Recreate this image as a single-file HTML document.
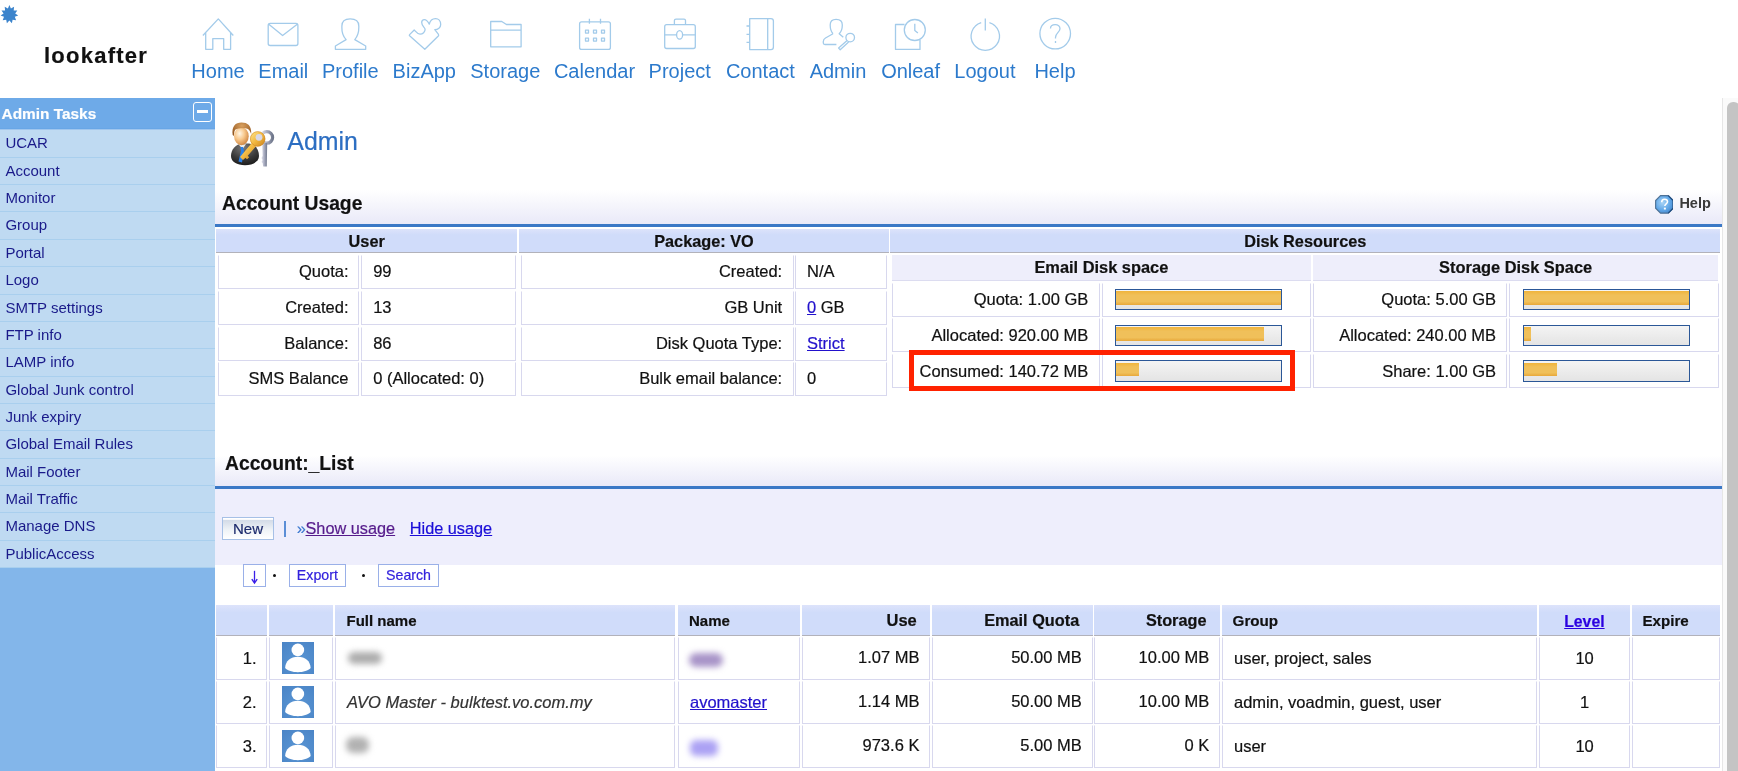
<!DOCTYPE html>
<html><head><meta charset="utf-8">
<style>
*{margin:0;padding:0;box-sizing:border-box}
html,body{width:1738px;height:771px;overflow:hidden;background:#fff;font-family:"Liberation Sans",sans-serif;color:#111}
.a{position:absolute}
.t{position:absolute;white-space:nowrap;line-height:1;-webkit-text-stroke:0.2px currentColor}
/* nav */
.nl{position:absolute;white-space:nowrap;font-size:19px;line-height:19px;color:#2f78c4;top:60px}
svg.ic{position:absolute;overflow:visible}
.ic *{fill:none;stroke:#a3cbea;stroke-width:1.3;stroke-linejoin:round}
/* sidebar */
#sb{position:absolute;left:0;top:98px;width:215px;height:673px;background:#83b6ea}
#sbh{position:absolute;left:0;top:0;width:215px;height:32.3px;background:linear-gradient(#6eaae8 0,#6eaae8 29.5px,#68a6e6 30.5px,#a0c6ee 31.5px,#bfdaf2 32.3px)}
.si{position:absolute;left:0;width:215px;height:27.37px;background:#bfdaf2;border-bottom:1px solid #a9cfee;font-size:15px;color:#1a1a8a;padding-left:5.4px;line-height:26px}
/* cells */
.c{position:absolute;border:1px solid #d8d8ee;border-top-color:#f6f6fb;font-size:16px;line-height:16px;color:#111;white-space:nowrap}
.hd{position:absolute;background:#d0dcfa;border-bottom:1.3px solid #b0b0b8;font-weight:bold;font-size:16px;color:#111;white-space:nowrap}
.bar{position:absolute;width:167px;height:21.4px;border:1.3px solid #2b5797;background:linear-gradient(#f4f4f4,#e4e4e4)}
.bar i{position:absolute;left:0;top:1.6px;height:13.4px;background:linear-gradient(#f0b43c,#f0c05a 30%,#f0c05a 75%,#e8a83a)}
</style></head><body><div id="wrap" style="position:absolute;left:0;top:0;width:1738px;height:771px;overflow:hidden;will-change:transform;background:#fff">

<!-- star -->
<svg class="a" style="left:0;top:4px" width="20" height="20" viewBox="0 0 20 20"><polygon fill="#3c84cc" points="9.4,1 10.9,4.4 14.1,2.8 13.7,6.4 17.3,6.6 15.2,9.6 18.2,11.6 14.8,12.8 16.1,16.2 12.6,15.7 11.9,19.2 9.4,16.6 6.9,19.2 6.2,15.7 2.7,16.2 4,12.8 0.6,11.6 3.6,9.6 1.5,6.6 5.1,6.4 4.7,2.8 7.9,4.4"/></svg>
<div class="t" style="left:44px;top:45.4px;font-size:22px;font-weight:bold;letter-spacing:1.25px;color:#111">lookafter</div>

<!-- nav icons -->
<svg class="ic" style="left:0;top:0" width="1100" height="60">
 <path d="M202.9,35.5 L218.3,18.9 L233.3,35.5 M205.7,32 V49.3 H212.8 V38.6 H223.7 V49.3 H230.6 V32"/>
 <rect x="268.2" y="23.4" width="29.7" height="22.1" rx="2"/><path d="M268.5,24 L282.6,35.5 L297.6,24"/>
 <path d="M346.1,39.6 C341,34 341.9,29 341.9,26 C341.9,21 345,18.9 350.2,18.9 C355.4,18.9 358.8,21 358.8,26 C358.8,29 359.5,34 354.8,39.6 L365.7,46 V49.3 H335.4 V46 Z"/>
 <path d="M409.6,34.6 L414.2,30 C416,31.8 417.5,34.2 420,34.2 C422.8,34.2 425.2,32 425.1,29.3 C425,27.5 421.7,26 421.7,22.5 C421.7,20.5 423,19.6 424.4,19.6 C426,19.6 427.5,20.8 429.3,24.1 C430,21 432.5,18.6 435.5,18.6 C438.5,18.6 440.7,21 440.7,24.5 C440.7,27.5 438,29.6 434.8,29.6 L438.3,34.1 C438.8,34.8 438.8,35.4 438.3,36 L424.8,49.3 L409.6,35.8 C409.2,35.4 409.2,35 409.6,34.6 Z"/>
 <path d="M490.7,46.8 V21.5 H501.8 L506.4,24.5 H521.1 V46.8 Z M490.7,30.1 H521.1"/>
 <rect x="579.6" y="21.8" width="30.8" height="27.6" rx="2"/><path d="M589.4,18.7 V23.8 M600.5,18.7 V23.8"/>
 <rect x="585.5" y="30.1" width="3" height="3"/><rect x="593.5" y="30.1" width="3" height="3"/><rect x="601.5" y="30.1" width="3" height="3"/>
 <rect x="585.5" y="38.1" width="3" height="3"/><rect x="593.5" y="38.1" width="3" height="3"/><rect x="601.5" y="38.1" width="3" height="3"/>
 <rect x="664.7" y="24.7" width="30.6" height="23.8" rx="2"/><path d="M674.4,24.7 V20.5 Q674.4,19.2 676,19.2 H684 Q685.5,19.2 685.5,20.5 V24.7 M664.7,34.9 H676.6 M682.6,34.9 H695.3"/><ellipse cx="679.6" cy="34.9" rx="3" ry="4.2"/>
 <path d="M749.7,18.7 H771 Q773.4,18.7 773.4,21 V47 Q773.4,49.6 771,49.6 H749.7 Z M767.7,18.7 V49.6 M746.5,26 H749.7 M746.5,34.4 H749.7 M746.5,42.4 H749.7"/>
 <path d="M833,33.8 C831,31.5 830.2,28 830.2,25 C830.2,21.2 832.8,19.3 836.1,19.3 C839.5,19.3 842.3,21.2 842.3,25 C842.3,28 841.5,31.5 839.2,33.8 L843.3,37.3 M833,33.8 L825.5,38 C823.8,39 823.3,40 823.3,41.5 V43 C823.3,44 824,44.5 825,44.5 H836.4"/>
 <circle cx="850.2" cy="37.6" r="4.3"/><path d="M847.1,40.5 L838.6,48.1 L840.2,49.7 L848.6,42"/>
 <path d="M904.5,24.5 H895.5 V49.4 H920 V40"/><circle cx="914.8" cy="30" r="10.5"/><path d="M914.8,23.8 V30.5 L917.9,33.1"/>
 <path d="M981.2,22.6 A14.2,14.2 0 1 0 989.4,22.6 M985.3,18.6 V30.6"/>
 <circle cx="1055.2" cy="33.6" r="15.3"/><path d="M1050.5,28.5 C1050.5,25.5 1052.5,24.6 1055.2,24.6 C1058,24.6 1060,26.5 1060,28.8 C1060,32 1055.5,33 1055.5,37.5 V38.5 M1055.5,41 V42.9"/>
</svg>

<!-- sidebar -->
<div id="sb">
 <div id="sbh"><div class="t" style="left:1.6px;top:8px;font-size:15.4px;font-weight:bold;color:#fff">Admin Tasks</div>
  <div class="a" style="left:193px;top:4px;width:19px;height:19.5px;border:1.6px solid #fff;border-radius:3px"></div>
  <div class="a" style="left:197px;top:12.2px;width:11px;height:3px;background:#fff"></div>
 </div>
 <div class="si" style="top:32.3px">UCAR</div>
 <div class="si" style="top:59.67px">Account</div>
 <div class="si" style="top:87.04px">Monitor</div>
 <div class="si" style="top:114.41px">Group</div>
 <div class="si" style="top:141.78px">Portal</div>
 <div class="si" style="top:169.15px">Logo</div>
 <div class="si" style="top:196.52px">SMTP settings</div>
 <div class="si" style="top:223.89px">FTP info</div>
 <div class="si" style="top:251.26px">LAMP info</div>
 <div class="si" style="top:278.63px">Global Junk control</div>
 <div class="si" style="top:306px">Junk expiry</div>
 <div class="si" style="top:333.37px">Global Email Rules</div>
 <div class="si" style="top:360.74px">Mail Footer</div>
 <div class="si" style="top:388.11px">Mail Traffic</div>
 <div class="si" style="top:415.48px">Manage DNS</div>
 <div class="si" style="top:442.85px">PublicAccess</div>
</div>

<!-- scrollbar -->
<div class="a" style="left:1722px;top:98px;width:16px;height:673px;background:#fafafa;border-left:1px solid #e6e6e6"></div>
<div class="a" style="left:1727px;top:102px;width:13px;height:700px;background:#c4c4c4;border-radius:6px"></div>

<div class="t" style="top:60.57px;font-size:20px;color:#2c7acc;left:218.00px;transform:translateX(-50%);-webkit-text-stroke:0;">Home</div>
<div class="t" style="top:60.57px;font-size:20px;color:#2c7acc;left:283.30px;transform:translateX(-50%);-webkit-text-stroke:0;">Email</div>
<div class="t" style="top:60.57px;font-size:20px;color:#2c7acc;left:350.30px;transform:translateX(-50%);-webkit-text-stroke:0;">Profile</div>
<div class="t" style="top:60.57px;font-size:20px;color:#2c7acc;left:424.30px;transform:translateX(-50%);-webkit-text-stroke:0;">BizApp</div>
<div class="t" style="top:60.57px;font-size:20px;color:#2c7acc;left:505.30px;transform:translateX(-50%);-webkit-text-stroke:0;">Storage</div>
<div class="t" style="top:60.57px;font-size:20px;color:#2c7acc;left:594.50px;transform:translateX(-50%);-webkit-text-stroke:0;">Calendar</div>
<div class="t" style="top:60.57px;font-size:20px;color:#2c7acc;left:679.70px;transform:translateX(-50%);-webkit-text-stroke:0;">Project</div>
<div class="t" style="top:60.57px;font-size:20px;color:#2c7acc;left:760.40px;transform:translateX(-50%);-webkit-text-stroke:0;">Contact</div>
<div class="t" style="top:60.57px;font-size:20px;color:#2c7acc;left:838.00px;transform:translateX(-50%);-webkit-text-stroke:0;">Admin</div>
<div class="t" style="top:60.57px;font-size:20px;color:#2c7acc;left:910.60px;transform:translateX(-50%);-webkit-text-stroke:0;">Onleaf</div>
<div class="t" style="top:60.57px;font-size:20px;color:#2c7acc;left:984.90px;transform:translateX(-50%);-webkit-text-stroke:0;">Logout</div>
<div class="t" style="top:60.57px;font-size:20px;color:#2c7acc;left:1055.00px;transform:translateX(-50%);-webkit-text-stroke:0;">Help</div>
<svg class="a" style="left:226px;top:118px" width="52" height="52" viewBox="0 0 52 52">
<defs>
<radialGradient id="sk" cx="0.38" cy="0.35" r="0.75"><stop offset="0" stop-color="#fff6e6"/><stop offset="0.45" stop-color="#f8c88c"/><stop offset="1" stop-color="#c87a34"/></radialGradient>
<radialGradient id="su" cx="0.45" cy="0.2" r="0.9"><stop offset="0" stop-color="#7a7a7a"/><stop offset="0.55" stop-color="#3a3a3a"/><stop offset="1" stop-color="#141414"/></radialGradient>
<radialGradient id="hr" cx="0.5" cy="0.25" r="0.8"><stop offset="0" stop-color="#d8a060"/><stop offset="1" stop-color="#8a4c14"/></radialGradient>
<linearGradient id="ky" x1="0" y1="0" x2="1" y2="1"><stop offset="0" stop-color="#ffe890"/><stop offset="0.5" stop-color="#f2b840"/><stop offset="1" stop-color="#c8801c"/></linearGradient>
<linearGradient id="kg" x1="0" y1="0" x2="1" y2="0"><stop offset="0" stop-color="#e4e4ee"/><stop offset="0.5" stop-color="#a8acc0"/><stop offset="1" stop-color="#70788c"/></linearGradient>
</defs>
<!-- silver key -->
<circle cx="40.8" cy="19.4" r="5.8" fill="none" stroke="url(#kg)" stroke-width="3.2"/>
<path d="M36.2,25 L41.2,25 L40.8,48.5 L37.2,48.5 L36.6,45 L35.4,44 L36.6,42 L35.4,40 L36.6,38 Z" fill="url(#kg)"/>
<!-- body -->
<path d="M5,38 C5,31 10,26.5 16,25.6 L23,25.6 C29,26.5 33,31 33,38 C33,44 26,47.2 19,47.2 C11,47.2 5,44 5,38 Z" fill="url(#su)"/>
<path d="M12.5,26.2 L20,26.2 L16.5,31 Z" fill="#eee"/>
<path d="M14.5,29 L17,29 L18,33 L16,44.5 L12.5,43.5 L15,33 Z" fill="#2a80e8"/>
<!-- face -->
<ellipse cx="15.4" cy="18.2" rx="7.3" ry="9" fill="url(#sk)"/>
<path d="M6.7,17 C5.5,8 9.5,4.4 15.5,4.4 C21.5,4.4 25.8,7.5 25.2,16 C24,12.5 22.5,10.8 20.5,10.5 C17,10 12,10.2 9.5,11.5 C8.5,12.5 8,14.5 7.8,18 Z" fill="url(#hr)"/>
<!-- gold key -->
<path d="M27,23.5 L14,39 L17,42 L19.5,39.8 L21,41.3 L23.2,39.2 L21.7,37.7 L31.5,26.5 Z" fill="url(#ky)"/>
<circle cx="31.7" cy="20.9" r="7.5" fill="url(#ky)"/>
<circle cx="31.7" cy="20.9" r="7.3" fill="none" stroke="#d08a2a" stroke-width="0.6"/>
<circle cx="33" cy="19.3" r="3.4" fill="#d8d8e6"/>
</svg>
<div class="t" style="top:128.92px;font-size:24.9px;color:#2c6ec2;left:287.30px;">Admin</div>
<div class="a" style="left:215.00px;top:190.00px;width:1506.50px;height:34.20px;background:linear-gradient(#fff,#e9e9f8)"></div>
<div class="a" style="left:215.00px;top:224.20px;width:1506.50px;height:2.60px;background:#3a78c6"></div>
<div class="t" style="top:193.76px;font-size:19.3px;font-weight:bold;color:#111;left:222.00px;">Account Usage</div>
<svg class="a" style="left:1654.6px;top:195.4px" width="18.8" height="18.8" viewBox="0 0 18 18">
<defs><radialGradient id="hg" cx="0.4" cy="0.4" r="0.75"><stop offset="0" stop-color="#a8d4f6"/><stop offset="0.55" stop-color="#62a8e8"/><stop offset="1" stop-color="#3a7ec8"/></radialGradient></defs>
<polygon points="5.3,0.6 12.7,0.6 17.4,5.3 17.4,12.7 12.7,17.4 5.3,17.4 0.6,12.7 0.6,5.3" fill="url(#hg)" stroke="#4f7296" stroke-width="1.1"/>
<path d="M12.7,0.6 L17.4,5.3 L17.4,12.7 L12.7,17.4" fill="none" stroke="#1d4c80" stroke-width="1.1"/>
<path d="M6.4,6.9 C6.4,4.9 7.7,4 9.2,4 C10.9,4 12,5 12,6.5 C12,8.4 9.4,8.7 9.4,10.6" fill="none" stroke="#fff" stroke-width="1.5"/>
<rect x="8.5" y="12.1" width="1.9" height="1.8" fill="#fff"/></svg>
<div class="t" style="top:195.52px;font-size:14.5px;font-weight:bold;color:#3a3a3a;left:1679.40px;-webkit-text-stroke:0;">Help</div>
<div class="a" style="left:216.20px;top:229.40px;width:301.00px;height:23.30px;background:linear-gradient(#dde3fb,#d0dcfa 25%);border-bottom:1.5px solid #b2b2ba"></div>
<div class="a" style="left:519.10px;top:229.40px;width:369.70px;height:23.30px;background:linear-gradient(#dde3fb,#d0dcfa 25%);border-bottom:1.5px solid #b2b2ba"></div>
<div class="a" style="left:890.20px;top:229.40px;width:830.10px;height:23.30px;background:linear-gradient(#dde3fb,#d0dcfa 25%);border-bottom:1.5px solid #b2b2ba"></div>
<div class="t" style="top:233.10px;font-size:16.3px;font-weight:bold;left:366.70px;transform:translateX(-50%);">User</div>
<div class="t" style="top:233.10px;font-size:16.3px;font-weight:bold;left:703.95px;transform:translateX(-50%);">Package: VO</div>
<div class="t" style="top:233.10px;font-size:16.3px;font-weight:bold;left:1305.25px;transform:translateX(-50%);">Disk Resources</div>
<div class="a" style="left:218.00px;top:255.00px;width:141.20px;height:34.00px;border:1px solid #d8d8ee;border-top-color:#fff;"></div>
<div class="a" style="left:361.00px;top:255.00px;width:155.00px;height:34.00px;border:1px solid #d8d8ee;border-top-color:#fff;"></div>
<div class="t" style="top:263.13px;font-size:16.5px;right:1389.50px;">Quota:</div>
<div class="t" style="top:263.13px;font-size:16.5px;left:373.20px;">99</div>
<div class="a" style="left:218.00px;top:290.70px;width:141.20px;height:34.00px;border:1px solid #d8d8ee;border-top-color:#fff;"></div>
<div class="a" style="left:361.00px;top:290.70px;width:155.00px;height:34.00px;border:1px solid #d8d8ee;border-top-color:#fff;"></div>
<div class="t" style="top:298.83px;font-size:16.5px;right:1389.50px;">Created:</div>
<div class="t" style="top:298.83px;font-size:16.5px;left:373.20px;">13</div>
<div class="a" style="left:218.00px;top:326.50px;width:141.20px;height:34.00px;border:1px solid #d8d8ee;border-top-color:#fff;"></div>
<div class="a" style="left:361.00px;top:326.50px;width:155.00px;height:34.00px;border:1px solid #d8d8ee;border-top-color:#fff;"></div>
<div class="t" style="top:334.63px;font-size:16.5px;right:1389.50px;">Balance:</div>
<div class="t" style="top:334.63px;font-size:16.5px;left:373.20px;">86</div>
<div class="a" style="left:218.00px;top:362.00px;width:141.20px;height:34.00px;border:1px solid #d8d8ee;border-top-color:#fff;"></div>
<div class="a" style="left:361.00px;top:362.00px;width:155.00px;height:34.00px;border:1px solid #d8d8ee;border-top-color:#fff;"></div>
<div class="t" style="top:370.13px;font-size:16.5px;right:1389.50px;">SMS Balance</div>
<div class="t" style="top:370.13px;font-size:16.5px;left:373.20px;">0 (Allocated: 0)</div>
<div class="a" style="left:521.00px;top:255.00px;width:272.80px;height:34.00px;border:1px solid #d8d8ee;border-top-color:#fff;"></div>
<div class="a" style="left:795.00px;top:255.00px;width:92.30px;height:34.00px;border:1px solid #d8d8ee;border-top-color:#fff;"></div>
<div class="t" style="top:263.13px;font-size:16.5px;right:955.80px;">Created:</div>
<div class="t" style="top:263.13px;font-size:16.5px;left:807.00px;">N/A</div>
<div class="a" style="left:521.00px;top:290.70px;width:272.80px;height:34.00px;border:1px solid #d8d8ee;border-top-color:#fff;"></div>
<div class="a" style="left:795.00px;top:290.70px;width:92.30px;height:34.00px;border:1px solid #d8d8ee;border-top-color:#fff;"></div>
<div class="t" style="top:298.83px;font-size:16.5px;right:955.80px;">GB Unit</div>
<div class="t" style="top:298.83px;font-size:16.5px;left:807.00px;"><u style="color:#2211cc">0</u> GB</div>
<div class="a" style="left:521.00px;top:326.50px;width:272.80px;height:34.00px;border:1px solid #d8d8ee;border-top-color:#fff;"></div>
<div class="a" style="left:795.00px;top:326.50px;width:92.30px;height:34.00px;border:1px solid #d8d8ee;border-top-color:#fff;"></div>
<div class="t" style="top:334.63px;font-size:16.5px;right:955.80px;">Disk Quota Type:</div>
<div class="t" style="top:334.63px;font-size:16.5px;left:807.00px;"><u style="color:#2211cc">Strict</u></div>
<div class="a" style="left:521.00px;top:362.00px;width:272.80px;height:34.00px;border:1px solid #d8d8ee;border-top-color:#fff;"></div>
<div class="a" style="left:795.00px;top:362.00px;width:92.30px;height:34.00px;border:1px solid #d8d8ee;border-top-color:#fff;"></div>
<div class="t" style="top:370.13px;font-size:16.5px;right:955.80px;">Bulk email balance:</div>
<div class="t" style="top:370.13px;font-size:16.5px;left:807.00px;">0</div>
<div class="a" style="left:891.70px;top:255.30px;width:419.30px;height:26.10px;background:#eeeefb;border-bottom:1px solid #dcdcf0"></div>
<div class="a" style="left:1312.80px;top:255.30px;width:405.70px;height:26.10px;background:#eeeefb;border-bottom:1px solid #dcdcf0"></div>
<div class="t" style="top:259.11px;font-size:16.4px;font-weight:bold;left:1101.35px;transform:translateX(-50%);">Email Disk space</div>
<div class="t" style="top:259.11px;font-size:16.4px;font-weight:bold;left:1515.65px;transform:translateX(-50%);">Storage Disk Space</div>
<div class="a" style="left:891.70px;top:282.60px;width:208.30px;height:34.00px;border:1px solid #d8d8ee;border-top-color:#fff;"></div>
<div class="a" style="left:1102.00px;top:282.60px;width:209.40px;height:34.00px;border:1px solid #d8d8ee;border-top-color:#fff;"></div>
<div class="a" style="left:1312.80px;top:282.60px;width:194.20px;height:34.00px;border:1px solid #d8d8ee;border-top-color:#fff;"></div>
<div class="a" style="left:1509.20px;top:282.60px;width:209.40px;height:34.00px;border:1px solid #d8d8ee;border-top-color:#fff;"></div>
<div class="t" style="top:291.03px;font-size:16.5px;right:649.70px;">Quota: 1.00 GB</div>
<div class="t" style="top:291.03px;font-size:16.5px;right:242.00px;">Quota: 5.00 GB</div>
<div class="bar" style="left:1115px;top:288.80px"><i style="width:165px"></i></div>
<div class="bar" style="left:1522.8px;top:288.80px"><i style="width:165px"></i></div>
<div class="a" style="left:891.70px;top:318.40px;width:208.30px;height:34.00px;border:1px solid #d8d8ee;border-top-color:#fff;"></div>
<div class="a" style="left:1102.00px;top:318.40px;width:209.40px;height:34.00px;border:1px solid #d8d8ee;border-top-color:#fff;"></div>
<div class="a" style="left:1312.80px;top:318.40px;width:194.20px;height:34.00px;border:1px solid #d8d8ee;border-top-color:#fff;"></div>
<div class="a" style="left:1509.20px;top:318.40px;width:209.40px;height:34.00px;border:1px solid #d8d8ee;border-top-color:#fff;"></div>
<div class="t" style="top:326.83px;font-size:16.5px;right:649.70px;">Allocated: 920.00 MB</div>
<div class="t" style="top:326.83px;font-size:16.5px;right:242.00px;">Allocated: 240.00 MB</div>
<div class="bar" style="left:1115px;top:324.60px"><i style="width:148px"></i></div>
<div class="bar" style="left:1522.8px;top:324.60px"><i style="width:7px"></i></div>
<div class="a" style="left:891.70px;top:354.20px;width:208.30px;height:34.00px;border:1px solid #d8d8ee;border-top-color:#fff;"></div>
<div class="a" style="left:1102.00px;top:354.20px;width:209.40px;height:34.00px;border:1px solid #d8d8ee;border-top-color:#fff;"></div>
<div class="a" style="left:1312.80px;top:354.20px;width:194.20px;height:34.00px;border:1px solid #d8d8ee;border-top-color:#fff;"></div>
<div class="a" style="left:1509.20px;top:354.20px;width:209.40px;height:34.00px;border:1px solid #d8d8ee;border-top-color:#fff;"></div>
<div class="t" style="top:362.63px;font-size:16.5px;right:649.70px;">Consumed: 140.72 MB</div>
<div class="t" style="top:362.63px;font-size:16.5px;right:242.00px;">Share: 1.00 GB</div>
<div class="bar" style="left:1115px;top:360.40px"><i style="width:23px"></i></div>
<div class="bar" style="left:1522.8px;top:360.40px"><i style="width:33px"></i></div>
<div class="a" style="left:909.20px;top:349.70px;width:386.20px;height:40.90px;border:5.1px solid #ff2200"></div>
<div class="a" style="left:215.00px;top:452.00px;width:1506.50px;height:34.40px;background:linear-gradient(#fff 10%,#e9e9f8)"></div>
<div class="a" style="left:215.00px;top:486.40px;width:1506.50px;height:3.00px;background:#3a78c6"></div>
<div class="t" style="top:454.46px;font-size:19.3px;font-weight:bold;color:#111;left:225.00px;">Account:_List</div>
<div class="a" style="left:215.00px;top:489.40px;width:1506.50px;height:75.40px;background:#eeeefc"></div>
<div class="a" style="left:222.10px;top:517.20px;width:51.90px;height:22.50px;border:1px solid #a6c0e6;background:linear-gradient(#fff 0,#fff 6%,#d4dce8 12%,#eef2f6 55%,#fff)"></div>
<div class="t" style="top:520.60px;font-size:15px;color:#1c2a6c;left:248.00px;transform:translateX(-50%);">New</div>
<div class="a" style="left:284.20px;top:521.20px;width:1.70px;height:15.60px;background:#5b8ed6"></div>
<div class="t" style="top:519.50px;font-size:16.3px;color:#3a78d0;left:296.80px;">&raquo;</div>
<div class="t" style="top:519.50px;font-size:16.3px;color:#551a8b;left:305.50px;"><u>Show usage</u></div>
<div class="t" style="top:519.50px;font-size:16.3px;color:#1a0dd8;left:409.80px;"><u>Hide usage</u></div>
<div class="a" style="left:243.10px;top:564.00px;width:22.60px;height:22.80px;border:1px solid #9ab0e8"></div>
<svg class="a" style="left:248px;top:568px" width="14" height="18" viewBox="0 0 14 18"><path d="M6.5,2.8 V14" stroke="#3a1fe8" stroke-width="1.3"/><path d="M3.8,11.2 L6.5,15 L9.2,11.2" fill="none" stroke="#3a1fe8" stroke-width="1.4"/></svg><div class="a" style="left:272.50px;top:573.50px;width:3.00px;height:3.00px;background:#111;border-radius:50%"></div>
<div class="a" style="left:289.10px;top:563.90px;width:56.50px;height:22.70px;border:1px solid #9ab0e8"></div>
<div class="t" style="top:568.48px;font-size:14.2px;color:#3322dd;left:317.35px;transform:translateX(-50%);">Export</div>
<div class="a" style="left:362.00px;top:573.50px;width:3.00px;height:3.00px;background:#111;border-radius:50%"></div>
<div class="a" style="left:378.10px;top:563.90px;width:60.80px;height:22.70px;border:1px solid #9ab0e8"></div>
<div class="t" style="top:568.48px;font-size:14.2px;color:#3322dd;left:408.50px;transform:translateX(-50%);">Search</div>
<div class="a" style="left:216.20px;top:604.90px;width:51.10px;height:31.10px;background:linear-gradient(#dde3fb,#d0dcfa 25%);border-bottom:1.5px solid #b2b2ba"></div>
<div class="a" style="left:269.20px;top:604.90px;width:63.80px;height:31.10px;background:linear-gradient(#dde3fb,#d0dcfa 25%);border-bottom:1.5px solid #b2b2ba"></div>
<div class="a" style="left:334.90px;top:604.90px;width:340.50px;height:31.10px;background:linear-gradient(#dde3fb,#d0dcfa 25%);border-bottom:1.5px solid #b2b2ba"></div>
<div class="a" style="left:677.70px;top:604.90px;width:122.10px;height:31.10px;background:linear-gradient(#dde3fb,#d0dcfa 25%);border-bottom:1.5px solid #b2b2ba"></div>
<div class="a" style="left:801.60px;top:604.90px;width:128.40px;height:31.10px;background:linear-gradient(#dde3fb,#d0dcfa 25%);border-bottom:1.5px solid #b2b2ba"></div>
<div class="a" style="left:931.80px;top:604.90px;width:161.10px;height:31.10px;background:linear-gradient(#dde3fb,#d0dcfa 25%);border-bottom:1.5px solid #b2b2ba"></div>
<div class="a" style="left:1094.30px;top:604.90px;width:125.70px;height:31.10px;background:linear-gradient(#dde3fb,#d0dcfa 25%);border-bottom:1.5px solid #b2b2ba"></div>
<div class="a" style="left:1221.70px;top:604.90px;width:315.30px;height:31.10px;background:linear-gradient(#dde3fb,#d0dcfa 25%);border-bottom:1.5px solid #b2b2ba"></div>
<div class="a" style="left:1539.00px;top:604.90px;width:90.80px;height:31.10px;background:linear-gradient(#dde3fb,#d0dcfa 25%);border-bottom:1.5px solid #b2b2ba"></div>
<div class="a" style="left:1631.70px;top:604.90px;width:88.60px;height:31.10px;background:linear-gradient(#dde3fb,#d0dcfa 25%);border-bottom:1.5px solid #b2b2ba"></div>
<div class="t" style="top:613.30px;font-size:15px;font-weight:bold;left:346.50px;">Full name</div>
<div class="t" style="top:613.30px;font-size:15px;font-weight:bold;left:689.00px;">Name</div>
<div class="t" style="top:612.03px;font-size:16.5px;font-weight:bold;right:821.20px;">Use</div>
<div class="t" style="top:612.20px;font-size:16.3px;font-weight:bold;right:658.80px;">Email Quota</div>
<div class="t" style="top:612.20px;font-size:16.3px;font-weight:bold;right:531.50px;">Storage</div>
<div class="t" style="top:613.13px;font-size:15.2px;font-weight:bold;left:1232.60px;">Group</div>
<div class="t" style="top:614.12px;font-size:15.8px;font-weight:bold;color:#2a00e0;left:1584.40px;transform:translateX(-50%);"><u>Level</u></div>
<div class="t" style="top:613.21px;font-size:15.1px;font-weight:bold;left:1642.50px;">Expire</div>
<div class="a" style="left:216.20px;top:636.60px;width:51.10px;height:43.20px;border:1px solid #d8d8ee;border-top-color:#fff;"></div>
<div class="a" style="left:269.20px;top:636.60px;width:63.80px;height:43.20px;border:1px solid #d8d8ee;border-top-color:#fff;"></div>
<div class="a" style="left:334.90px;top:636.60px;width:340.50px;height:43.20px;border:1px solid #d8d8ee;border-top-color:#fff;"></div>
<div class="a" style="left:677.70px;top:636.60px;width:122.10px;height:43.20px;border:1px solid #d8d8ee;border-top-color:#fff;"></div>
<div class="a" style="left:801.60px;top:636.60px;width:128.40px;height:43.20px;border:1px solid #d8d8ee;border-top-color:#fff;"></div>
<div class="a" style="left:931.80px;top:636.60px;width:161.10px;height:43.20px;border:1px solid #d8d8ee;border-top-color:#fff;"></div>
<div class="a" style="left:1094.30px;top:636.60px;width:125.70px;height:43.20px;border:1px solid #d8d8ee;border-top-color:#fff;"></div>
<div class="a" style="left:1221.70px;top:636.60px;width:315.30px;height:43.20px;border:1px solid #d8d8ee;border-top-color:#fff;"></div>
<div class="a" style="left:1539.00px;top:636.60px;width:90.80px;height:43.20px;border:1px solid #d8d8ee;border-top-color:#fff;"></div>
<div class="a" style="left:1631.70px;top:636.60px;width:88.60px;height:43.20px;border:1px solid #d8d8ee;border-top-color:#fff;"></div>
<div class="t" style="top:649.63px;font-size:16.5px;right:1481.50px;">1.</div>
<div class="a" style="left:281.50px;top:641.90px;width:32.70px;height:32.60px;background:radial-gradient(circle at 50% 60%,#5a96d4,#4a84c6)"></div>
<svg class="a" style="left:281.5px;top:641.90px" width="32.7" height="32.6" viewBox="0 0 33 33"><circle cx="16" cy="8" r="6.4" fill="#fff"/><path d="M3.1,26.4 C3.5,19 8.5,15 16,15 C23.5,15 28.5,19 29,26.4 C24,32 8,32 3.1,26.4 Z" fill="#fff"/></svg>
<div class="t" style="top:649.63px;font-size:16.5px;left:347.00px;"></div>
<div class="t" style="top:649.63px;font-size:16.5px;left:690.00px;"></div>
<div class="t" style="top:649.23px;font-size:16.5px;right:818.60px;">1.07 MB</div>
<div class="t" style="top:649.23px;font-size:16.5px;right:656.20px;">50.00 MB</div>
<div class="t" style="top:649.23px;font-size:16.5px;right:528.80px;">10.00 MB</div>
<div class="t" style="top:649.63px;font-size:16.5px;left:1234.00px;">user, project, sales</div>
<div class="t" style="top:649.63px;font-size:16.5px;left:1584.60px;transform:translateX(-50%);">10</div>
<div class="a" style="left:216.20px;top:680.60px;width:51.10px;height:43.20px;border:1px solid #d8d8ee;border-top-color:#fff;"></div>
<div class="a" style="left:269.20px;top:680.60px;width:63.80px;height:43.20px;border:1px solid #d8d8ee;border-top-color:#fff;"></div>
<div class="a" style="left:334.90px;top:680.60px;width:340.50px;height:43.20px;border:1px solid #d8d8ee;border-top-color:#fff;"></div>
<div class="a" style="left:677.70px;top:680.60px;width:122.10px;height:43.20px;border:1px solid #d8d8ee;border-top-color:#fff;"></div>
<div class="a" style="left:801.60px;top:680.60px;width:128.40px;height:43.20px;border:1px solid #d8d8ee;border-top-color:#fff;"></div>
<div class="a" style="left:931.80px;top:680.60px;width:161.10px;height:43.20px;border:1px solid #d8d8ee;border-top-color:#fff;"></div>
<div class="a" style="left:1094.30px;top:680.60px;width:125.70px;height:43.20px;border:1px solid #d8d8ee;border-top-color:#fff;"></div>
<div class="a" style="left:1221.70px;top:680.60px;width:315.30px;height:43.20px;border:1px solid #d8d8ee;border-top-color:#fff;"></div>
<div class="a" style="left:1539.00px;top:680.60px;width:90.80px;height:43.20px;border:1px solid #d8d8ee;border-top-color:#fff;"></div>
<div class="a" style="left:1631.70px;top:680.60px;width:88.60px;height:43.20px;border:1px solid #d8d8ee;border-top-color:#fff;"></div>
<div class="t" style="top:693.63px;font-size:16.5px;right:1481.50px;">2.</div>
<div class="a" style="left:281.50px;top:685.90px;width:32.70px;height:32.60px;background:radial-gradient(circle at 50% 60%,#5a96d4,#4a84c6)"></div>
<svg class="a" style="left:281.5px;top:685.90px" width="32.7" height="32.6" viewBox="0 0 33 33"><circle cx="16" cy="8" r="6.4" fill="#fff"/><path d="M3.1,26.4 C3.5,19 8.5,15 16,15 C23.5,15 28.5,19 29,26.4 C24,32 8,32 3.1,26.4 Z" fill="#fff"/></svg>
<div class="t" style="top:693.63px;font-size:16.5px;left:347.00px;"><i style="color:#333">AVO Master - bulktest.vo.com.my</i></div>
<div class="t" style="top:693.63px;font-size:16.5px;left:690.00px;"><u style="color:#2211cc">avomaster</u></div>
<div class="t" style="top:693.23px;font-size:16.5px;right:818.60px;">1.14 MB</div>
<div class="t" style="top:693.23px;font-size:16.5px;right:656.20px;">50.00 MB</div>
<div class="t" style="top:693.23px;font-size:16.5px;right:528.80px;">10.00 MB</div>
<div class="t" style="top:693.63px;font-size:16.5px;left:1234.00px;">admin, voadmin, guest, user</div>
<div class="t" style="top:693.63px;font-size:16.5px;left:1584.60px;transform:translateX(-50%);">1</div>
<div class="a" style="left:216.20px;top:724.60px;width:51.10px;height:43.20px;border:1px solid #d8d8ee;border-top-color:#fff;"></div>
<div class="a" style="left:269.20px;top:724.60px;width:63.80px;height:43.20px;border:1px solid #d8d8ee;border-top-color:#fff;"></div>
<div class="a" style="left:334.90px;top:724.60px;width:340.50px;height:43.20px;border:1px solid #d8d8ee;border-top-color:#fff;"></div>
<div class="a" style="left:677.70px;top:724.60px;width:122.10px;height:43.20px;border:1px solid #d8d8ee;border-top-color:#fff;"></div>
<div class="a" style="left:801.60px;top:724.60px;width:128.40px;height:43.20px;border:1px solid #d8d8ee;border-top-color:#fff;"></div>
<div class="a" style="left:931.80px;top:724.60px;width:161.10px;height:43.20px;border:1px solid #d8d8ee;border-top-color:#fff;"></div>
<div class="a" style="left:1094.30px;top:724.60px;width:125.70px;height:43.20px;border:1px solid #d8d8ee;border-top-color:#fff;"></div>
<div class="a" style="left:1221.70px;top:724.60px;width:315.30px;height:43.20px;border:1px solid #d8d8ee;border-top-color:#fff;"></div>
<div class="a" style="left:1539.00px;top:724.60px;width:90.80px;height:43.20px;border:1px solid #d8d8ee;border-top-color:#fff;"></div>
<div class="a" style="left:1631.70px;top:724.60px;width:88.60px;height:43.20px;border:1px solid #d8d8ee;border-top-color:#fff;"></div>
<div class="t" style="top:737.63px;font-size:16.5px;right:1481.50px;">3.</div>
<div class="a" style="left:281.50px;top:729.90px;width:32.70px;height:32.60px;background:radial-gradient(circle at 50% 60%,#5a96d4,#4a84c6)"></div>
<svg class="a" style="left:281.5px;top:729.90px" width="32.7" height="32.6" viewBox="0 0 33 33"><circle cx="16" cy="8" r="6.4" fill="#fff"/><path d="M3.1,26.4 C3.5,19 8.5,15 16,15 C23.5,15 28.5,19 29,26.4 C24,32 8,32 3.1,26.4 Z" fill="#fff"/></svg>
<div class="t" style="top:737.63px;font-size:16.5px;left:347.00px;"></div>
<div class="t" style="top:737.63px;font-size:16.5px;left:690.00px;"></div>
<div class="t" style="top:737.23px;font-size:16.5px;right:818.60px;">973.6 K</div>
<div class="t" style="top:737.23px;font-size:16.5px;right:656.20px;">5.00 MB</div>
<div class="t" style="top:737.23px;font-size:16.5px;right:528.80px;">0 K</div>
<div class="t" style="top:737.63px;font-size:16.5px;left:1234.00px;">user</div>
<div class="t" style="top:737.63px;font-size:16.5px;left:1584.60px;transform:translateX(-50%);">10</div>
<div class="a" style="left:348.00px;top:652.00px;width:34.00px;height:12.00px;background:#acacac;border-radius:6px;filter:blur(3.4px)"></div>
<div class="a" style="left:689.00px;top:653.00px;width:34.00px;height:14.00px;background:#a894c8;border-radius:7px;filter:blur(3.4px)"></div>
<div class="a" style="left:346.00px;top:737.00px;width:22.50px;height:16.00px;background:#b2b2b2;border-radius:7px;filter:blur(3.4px)"></div>
<div class="a" style="left:690.00px;top:740.00px;width:28.00px;height:16.00px;background:#aca2f4;border-radius:6px;filter:blur(3.4px)"></div>
</div></body></html>
